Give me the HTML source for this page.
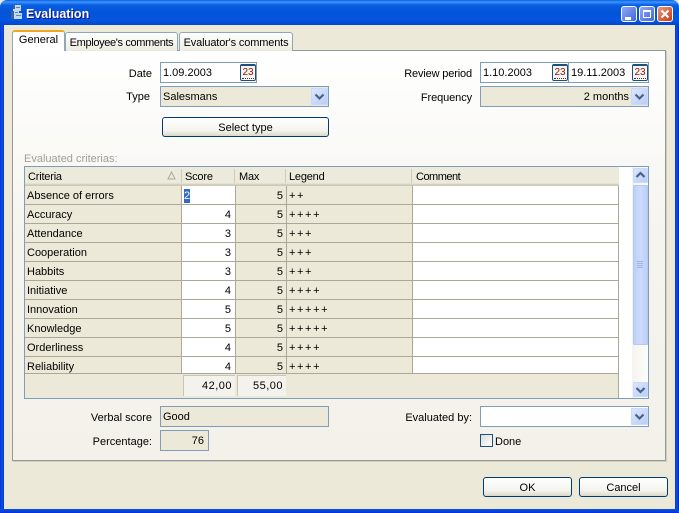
<!DOCTYPE html>
<html><head><meta charset="utf-8"><style>
html,body{margin:0;padding:0;width:679px;height:513px;overflow:hidden;background:#ece9d8}
body{position:relative;font:11px "Liberation Sans",sans-serif;color:#000}
div,span{position:absolute;box-sizing:border-box;white-space:nowrap}
svg{position:absolute;display:block}
.t{line-height:14px;height:14px;margin-top:1px}
.r{text-align:right}
.p{letter-spacing:1.600px}
.f{border:1px solid #7f9db9;background:#fff;height:21px}
.ro{background:#ece9d8}
.btn{border:1px solid #003c74;border-radius:3px;background:linear-gradient(#fff,#f4f3ee 70%,#dcd8c8);text-align:center;line-height:20px}
.tab{background:linear-gradient(#fff,#ecebe0);border:1px solid #91a7b4;border-bottom:0;border-radius:3px 3px 0 0;text-align:center}
.c{background:#ece9d8}
.line{background:#aca899;height:1px}
.v{background:#aca899;width:1px}
.arr{width:17px;height:17px;background:linear-gradient(135deg,#dbe6fe,#b8cdf9);border:1px solid #c9d9f9;border-radius:1px}
.arr svg{left:0;top:0}
.cal{width:16px;height:17px;border:1px solid #1c4f7c;border-radius:2px;background:#f6f5ef;color:#8c1010;font-size:10px;line-height:13px;text-align:center;overflow:hidden;border-top-width:2px}
.cal i{position:absolute;left:1px;right:1px;bottom:1px;border-bottom:1px dotted #333}
.h{top:168px;height:19px;line-height:19px;letter-spacing:-.2px}
</style></head><body>
<!-- window frame -->
<div style="left:0;top:0;width:679px;height:25px;background:linear-gradient(#0a5fe0 0,#3d95ff 2px,#0a5fe0 5px,#0453d8 12px,#0555e0 20px,#0346c8 25px);border-radius:7px 7px 0 0"></div>
<div style="left:0;top:25px;width:4px;height:488px;background:linear-gradient(90deg,#0831d9,#0855dd 50%,#0831d9)"></div>
<div style="left:675px;top:25px;width:4px;height:488px;background:linear-gradient(90deg,#0831d9,#0855dd 50%,#0021a8)"></div>
<div style="left:0;top:509px;width:679px;height:4px;background:linear-gradient(#0855dd,#0831d9)"></div>
<!-- title icon -->
<svg style="left:9px;top:4px" width="14" height="17" viewBox="0 0 14 17"><path d="M4 1h8v6h-2v2h3v6H4v-3H2V7h2z" fill="#c4d8ee"/><path d="M2 7h3v8H2zM4 1h2v4H4z" fill="#3a6592"/><path d="M7 3h4v1H7zM6 8h3v1H6zM7 11h5v1H7z" fill="#5d86b4"/></svg>
<div class="t" style="left:26px;top:6px;color:#fff;font-weight:bold;font-size:12.500px;line-height:15px;height:15px;text-shadow:1px 1px 0 #0f1089">Evaluation</div>
<!-- caption buttons -->
<div style="left:621px;top:6px;width:16px;height:16px;border:1px solid #fff;border-radius:3px;background:linear-gradient(135deg,#8fa9f5,#3f68df)"><div style="left:3px;top:10px;width:6px;height:3px;background:#fff"></div></div>
<div style="left:639px;top:6px;width:16px;height:16px;border:1px solid #fff;border-radius:3px;background:linear-gradient(135deg,#8fa9f5,#3f68df)"><div style="left:3px;top:3px;width:8px;height:8px;border:1px solid #fff;border-top-width:2px"></div></div>
<div style="left:657px;top:6px;width:16px;height:16px;border:1px solid #fff;border-radius:3px;background:linear-gradient(135deg,#eb9a80,#c63a12)"><svg width="14" height="14" style="left:0;top:0"><path d="M3.500 3.500l7 7M10.500 3.500l-7 7" stroke="#fff" stroke-width="2"/></svg></div>
<!-- tab panel -->
<div style="left:12px;top:50px;width:654px;height:411px;border:1px solid #919b9c;box-shadow:1px 1px 0 #d0cdbf;background:linear-gradient(#fff,#f5f4ef 45%,#f3f1ea)"></div>
<div class="tab" style="left:65px;top:32px;width:113px;height:19px;line-height:20px;letter-spacing:-.35px">Employee's comments</div>
<div class="tab" style="left:179px;top:32px;width:114px;height:19px;line-height:20px;letter-spacing:-.15px">Evaluator's comments</div>
<div class="tab" style="left:12px;top:30px;width:53px;height:21px;line-height:17px;background:#fff;border-top:2px solid #f2a51f;border-bottom:0">General</div>
<!-- top-left form -->
<div class="t r" style="left:100px;top:66px;width:52px">Date</div>
<div class="f" style="left:160px;top:62px;width:97px"></div>
<div class="t" style="left:163px;top:65px">1.09.2003</div>
<div class="cal" style="left:240px;top:64px">23<i></i></div>
<div class="t r" style="left:100px;top:89px;width:50px">Type</div>
<div class="f ro" style="left:160px;top:86px;width:169px"></div>
<div class="t" style="left:163px;top:89px">Salesmans</div>
<div class="arr" style="left:311px;top:88px"><svg width="15" height="15"><path d="M3.500 5.500l4 4 4-4" fill="none" stroke="#4d6185" stroke-width="2.200"/></svg></div>
<div class="btn" style="left:162px;top:117px;width:167px;height:20px">Select type</div>
<!-- top-right form -->
<div class="t r" style="left:390px;top:66px;width:82px;letter-spacing:-.15px">Review period</div>
<div class="f" style="left:480px;top:62px;width:89px"></div>
<div class="f" style="left:568px;top:62px;width:81px"></div>
<div class="t" style="left:483px;top:65px">1.10.2003</div>
<div class="t" style="left:571px;top:65px">19.11.2003</div>
<div class="cal" style="left:552px;top:64px">23<i></i></div>
<div class="cal" style="left:632px;top:64px">23<i></i></div>
<div class="t r" style="left:390px;top:90px;width:82px;letter-spacing:-.1px">Frequency</div>
<div class="f ro" style="left:480px;top:86px;width:169px"></div>
<div class="t r" style="left:530px;top:89px;width:99px">2 months</div>
<div class="arr" style="left:631px;top:88px"><svg width="15" height="15"><path d="M3.500 5.500l4 4 4-4" fill="none" stroke="#4d6185" stroke-width="2.200"/></svg></div>
<div class="t" style="left:24px;top:151px;color:#a0a098">Evaluated criterias:</div>
<!-- grid -->
<div style="left:24px;top:166px;width:625px;height:233px;border:1px solid #7f9db9;background:#fff"></div>
<div style="left:25px;top:167px;width:594px;height:19px;background:linear-gradient(#ebeadb,#ebeadb 85%,#d6d2c2 90%,#cbc7b8)"></div>
<div class="c" style="left:25px;top:186px;width:157px;height:188px"></div>
<div class="c" style="left:236px;top:186px;width:177px;height:188px"></div>
<div class="c" style="left:25px;top:374px;width:594px;height:24px"></div>
<div class="v" style="left:181px;top:186px;height:188px"></div>
<div class="v" style="left:235px;top:186px;height:188px"></div>
<div class="v" style="left:286px;top:186px;height:188px"></div>
<div class="v" style="left:412px;top:186px;height:188px"></div>
<div class="v" style="left:618px;top:186px;height:212px"></div>
<div class="v" style="left:181px;top:169px;height:14px;background:#d0ccbc"></div>
<div class="v" style="left:234px;top:169px;height:14px;background:#d0ccbc"></div>
<div class="v" style="left:285px;top:169px;height:14px;background:#d0ccbc"></div>
<div class="v" style="left:411px;top:169px;height:14px;background:#d0ccbc"></div>
<div class="h" style="left:28px">Criteria</div>
<svg style="left:167px;top:171px" width="9" height="9"><path d="M4.500 1L8 8H1z" fill="none" stroke="#aca899"/></svg>
<div class="h" style="left:185px">Score</div>
<div class="h" style="left:239px">Max</div>
<div class="h" style="left:289px">Legend</div>
<div class="h" style="left:416px;letter-spacing:-.5px">Comment</div>
<div class="line" style="left:25px;top:204px;width:594px"></div>
<div class="line" style="left:25px;top:223px;width:594px"></div>
<div class="line" style="left:25px;top:242px;width:594px"></div>
<div class="line" style="left:25px;top:261px;width:594px"></div>
<div class="line" style="left:25px;top:280px;width:594px"></div>
<div class="line" style="left:25px;top:299px;width:594px"></div>
<div class="line" style="left:25px;top:318px;width:594px"></div>
<div class="line" style="left:25px;top:337px;width:594px"></div>
<div class="line" style="left:25px;top:356px;width:594px"></div>
<div class="line" style="left:25px;top:373px;width:594px"></div>
<!-- rows -->
<div class="t" style="left:27px;top:188px">Absence of errors</div>
<div class="t" style="left:184px;top:188px;width:6px;background:#316ac5;color:#fff;text-align:center">2</div>
<div class="t r" style="left:240px;top:188px;width:43px">5</div><div class="t p" style="left:289px;top:188px">++</div>
<div class="t" style="left:27px;top:207px">Accuracy</div><div class="t r" style="left:190px;top:207px;width:41px">4</div>
<div class="t r" style="left:240px;top:207px;width:43px">5</div><div class="t p" style="left:289px;top:207px">++++</div>
<div class="t" style="left:27px;top:226px">Attendance</div><div class="t r" style="left:190px;top:226px;width:41px">3</div>
<div class="t r" style="left:240px;top:226px;width:43px">5</div><div class="t p" style="left:289px;top:226px">+++</div>
<div class="t" style="left:27px;top:245px">Cooperation</div><div class="t r" style="left:190px;top:245px;width:41px">3</div>
<div class="t r" style="left:240px;top:245px;width:43px">5</div><div class="t p" style="left:289px;top:245px">+++</div>
<div class="t" style="left:27px;top:264px">Habbits</div><div class="t r" style="left:190px;top:264px;width:41px">3</div>
<div class="t r" style="left:240px;top:264px;width:43px">5</div><div class="t p" style="left:289px;top:264px">+++</div>
<div class="t" style="left:27px;top:283px">Initiative</div><div class="t r" style="left:190px;top:283px;width:41px">4</div>
<div class="t r" style="left:240px;top:283px;width:43px">5</div><div class="t p" style="left:289px;top:283px">++++</div>
<div class="t" style="left:27px;top:302px">Innovation</div><div class="t r" style="left:190px;top:302px;width:41px">5</div>
<div class="t r" style="left:240px;top:302px;width:43px">5</div><div class="t p" style="left:289px;top:302px">+++++</div>
<div class="t" style="left:27px;top:321px">Knowledge</div><div class="t r" style="left:190px;top:321px;width:41px">5</div>
<div class="t r" style="left:240px;top:321px;width:43px">5</div><div class="t p" style="left:289px;top:321px">+++++</div>
<div class="t" style="left:27px;top:340px">Orderliness</div><div class="t r" style="left:190px;top:340px;width:41px">4</div>
<div class="t r" style="left:240px;top:340px;width:43px">5</div><div class="t p" style="left:289px;top:340px">++++</div>
<div class="t" style="left:27px;top:359px">Reliability</div><div class="t r" style="left:190px;top:359px;width:41px">4</div>
<div class="t r" style="left:240px;top:359px;width:43px">5</div><div class="t p" style="left:289px;top:359px">++++</div>
<!-- totals -->
<div class="t r" style="left:183px;top:375px;width:52px;height:21px;line-height:21px;margin-top:0;background:#f3f2ec;border:1px solid #c8c5b6;border-right:0;border-bottom:0;padding-right:3px;letter-spacing:.5px">42,00</div>
<div class="t r" style="left:237px;top:375px;width:49px;height:21px;line-height:21px;margin-top:0;background:#f3f2ec;border:1px solid #c8c5b6;border-right:0;border-bottom:0;padding-right:3px;letter-spacing:.5px">55,00</div>
<!-- scrollbar -->
<div style="left:632px;top:167px;width:16px;height:231px;background:linear-gradient(90deg,#f4f3ee,#fdfdfb)"></div>
<div class="arr" style="left:633px;top:168px;width:15px;height:15px"><svg width="13" height="13"><path d="M2.500 8l4-4 4 4" fill="none" stroke="#4d6185" stroke-width="2.200"/></svg></div>
<div style="left:633px;top:185px;width:15px;height:160px;background:linear-gradient(90deg,#bccff8,#cddbfc 50%,#bccff8);border:1px solid #b4c8f0;border-radius:1px"></div>
<svg style="left:636px;top:260px" width="8" height="9"><path d="M1 1.500h6M1 3.500h6M1 5.500h6M1 7.500h6" stroke="#9db4e6"/></svg>
<div class="arr" style="left:633px;top:382px;width:15px;height:15px"><svg width="13" height="13"><path d="M2.500 5l4 4 4-4" fill="none" stroke="#4d6185" stroke-width="2.200"/></svg></div>
<!-- bottom form -->
<div class="t r" style="left:60px;top:410px;width:92px">Verbal score</div>
<div class="f ro" style="left:160px;top:406px;width:169px"></div>
<div class="t" style="left:163px;top:409px">Good</div>
<div class="t r" style="left:60px;top:434px;width:92px">Percentage:</div>
<div class="f ro" style="left:160px;top:430px;width:49px"></div>
<div class="t r" style="left:165px;top:433px;width:39px">76</div>
<div class="t r" style="left:380px;top:410px;width:92px">Evaluated by:</div>
<div class="f" style="left:480px;top:406px;width:169px"></div>
<div class="arr" style="left:631px;top:408px"><svg width="15" height="15"><path d="M3.500 5.500l4 4 4-4" fill="none" stroke="#4d6185" stroke-width="2.200"/></svg></div>
<div style="left:480px;top:434px;width:13px;height:13px;border:1px solid #1c5180;background:linear-gradient(135deg,#dcdcd7,#fff)"></div>
<div class="t" style="left:495px;top:434px">Done</div>
<!-- dialog buttons -->
<div class="btn" style="left:483px;top:477px;width:89px;height:20px">OK</div>
<div class="btn" style="left:579px;top:477px;width:89px;height:20px">Cancel</div>
</body></html>
